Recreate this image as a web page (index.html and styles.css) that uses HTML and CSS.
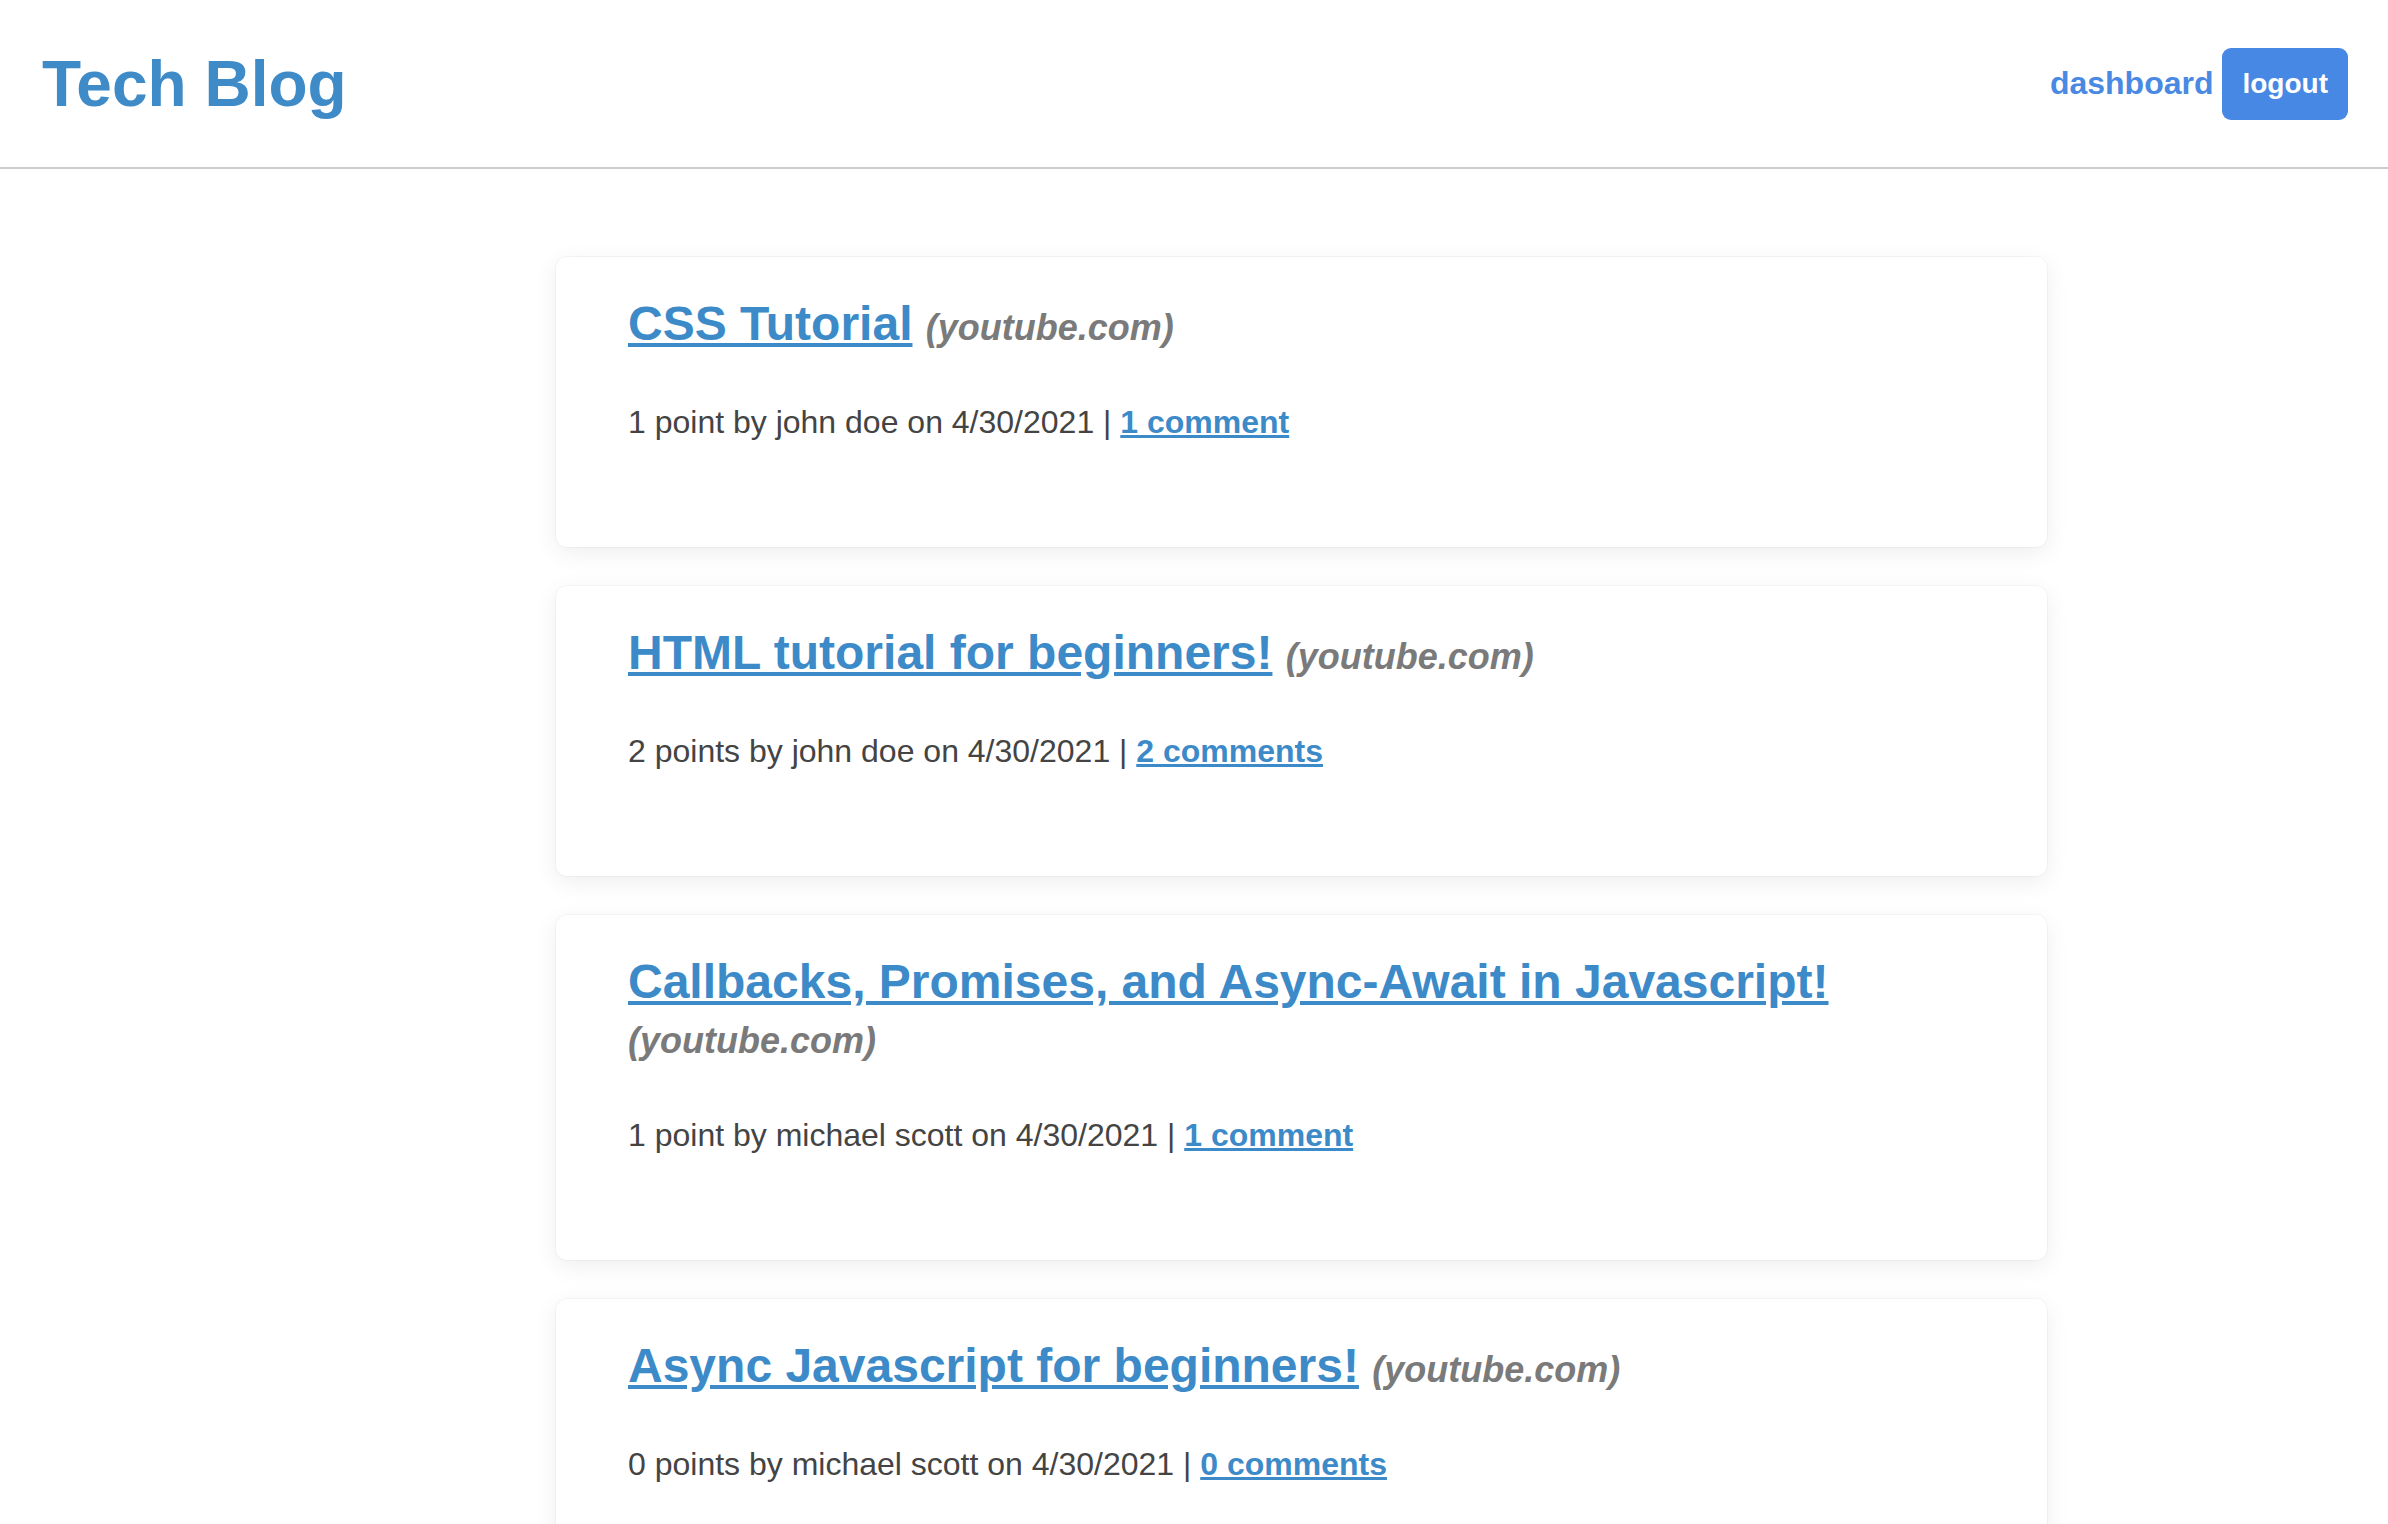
FILE: index.html
```html
<!DOCTYPE html>
<html lang="en">
<head>
<meta charset="utf-8">
<title>Tech Blog</title>
<link rel="stylesheet" href="styles.css">
</head>
<body>
<header class="site-header">
  <h1 class="brand">Tech Blog</h1>
  <nav class="nav">
    <a class="nav-link" href="#">dashboard</a>
    <button class="btn-logout" type="button">logout</button>
  </nav>
</header>
<main class="posts">
  <article class="post-card">
    <h2 class="post-title"><a href="#">CSS Tutorial</a> <span class="post-domain">(youtube.com)</span></h2>
    <p class="post-meta">1 point by john doe on 4/30/2021 | <a href="#">1 comment</a></p>
  </article>
  <article class="post-card">
    <h2 class="post-title"><a href="#">HTML tutorial for beginners!</a> <span class="post-domain">(youtube.com)</span></h2>
    <p class="post-meta">2 points by john doe on 4/30/2021 | <a href="#">2 comments</a></p>
  </article>
  <article class="post-card">
    <h2 class="post-title"><a href="#">Callbacks, Promises, and Async-Await in Javascript!</a> <span class="post-domain">(youtube.com)</span></h2>
    <p class="post-meta">1 point by michael scott on 4/30/2021 | <a href="#">1 comment</a></p>
  </article>
  <article class="post-card">
    <h2 class="post-title"><a href="#">Async Javascript for beginners!</a> <span class="post-domain">(youtube.com)</span></h2>
    <p class="post-meta">0 points by michael scott on 4/30/2021 | <a href="#">0 comments</a></p>
  </article>
</main>
</body>
</html>
```
FILE: styles.css
```css
* {
  box-sizing: border-box;
}

body {
  margin: 0;
  background: #ffffff;
  font-family: "Liberation Sans", Arial, Helvetica, sans-serif;
  color: #444444;
}

.site-header {
  display: flex;
  align-items: center;
  justify-content: space-between;
  height: 169px;
  padding: 0 40px 0 42px;
  border-bottom: 2px solid #cccccc;
}

.brand {
  margin: 0;
  font-size: 64px;
  font-weight: 700;
  color: #3e8bc8;
  line-height: 1;
}

.nav {
  display: flex;
  align-items: center;
  gap: 9px;
}

.nav-link {
  font-size: 32px;
  font-weight: 700;
  color: #4a89e3;
  text-decoration: none;
}

.btn-logout {
  height: 72px;
  padding: 0 20px;
  border: none;
  border-radius: 9px;
  background: #4788e4;
  color: #ffffff;
  font-family: "Liberation Sans", Arial, Helvetica, sans-serif;
  font-size: 28px;
  font-weight: 700;
  cursor: pointer;
}

.posts {
  display: flex;
  flex-direction: column;
  gap: 39px;
  padding: 88px 0 60px 556px;
}

.post-card {
  width: 1491px;
  padding: 39px 71px 106px 72px;
  background: #ffffff;
  border-radius: 11px;
  box-shadow: 0 0 0 1px rgba(0, 0, 0, 0.03), 0 6px 24px rgba(0, 0, 0, 0.07);
}

.post-title {
  margin: 0 0 53px;
  font-size: 48px;
  line-height: 55px;
  font-weight: 700;
}

.post-title a {
  color: #3d8ac8;
  text-decoration: underline;
}

.post-domain {
  font-size: 36px;
  line-height: 1;
  font-style: italic;
  font-weight: 700;
  color: #7a7a7a;
}

.post-meta {
  margin: 0;
  font-size: 32px;
  line-height: 37px;
  color: #444444;
}

.post-meta a {
  color: #3d8ac8;
  font-weight: 700;
  text-decoration: underline;
}
```
